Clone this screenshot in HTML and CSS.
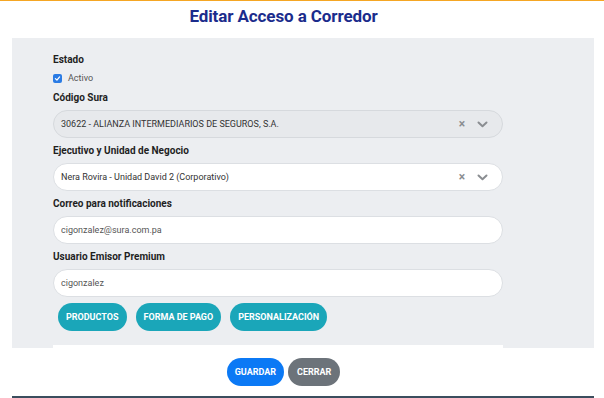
FILE: index.html
```html
<!DOCTYPE html>
<html lang="es">
<head>
  <meta charset="UTF-8" />
  <title>Editar Acceso a Corredor</title>
  <meta name="viewport" content="width=device-width, initial-scale=1.0" />
  <link rel="stylesheet" href="styles.css">
</head>
<body>
  <div class="modal-header">
    <h1 class="modal-title">Editar Acceso a Corredor</h1>
  </div>

  <div class="modal-body">
    <div class="field">
      <div class="label label-short">Estado</div>
      <label class="check-row">
        <span class="check">
          <svg width="7" height="7" viewBox="0 0 10 10"><path d="M2 5.2 L4.2 7.3 L8 2.8" fill="none" stroke="#fff" stroke-width="1.8" stroke-linecap="round" stroke-linejoin="round"/></svg>
        </span>
        <span class="check-text">Activo</span>
      </label>
    </div>

    <div class="field">
      <div class="label">Código Sura</div>
      <div class="select disabled">
        <span class="select-value">30622 - ALIANZA INTERMEDIARIOS DE SEGUROS, S.A.</span>
        <span class="select-clear">×</span>
        <svg class="select-arrow" width="11" height="7" viewBox="0 0 11 7"><path d="M1.5 1.5 L5.5 5.2 L9.5 1.5" fill="none" stroke="#8a8d91" stroke-width="2" stroke-linecap="round" stroke-linejoin="round"/></svg>
      </div>
    </div>

    <div class="field">
      <div class="label">Ejecutivo y Unidad de Negocio</div>
      <div class="select">
        <span class="select-value">Nera Rovira - Unidad David 2 (Corporativo)</span>
        <span class="select-clear">×</span>
        <svg class="select-arrow" width="11" height="7" viewBox="0 0 11 7"><path d="M1.5 1.5 L5.5 5.2 L9.5 1.5" fill="none" stroke="#8a8d91" stroke-width="2" stroke-linecap="round" stroke-linejoin="round"/></svg>
      </div>
    </div>

    <div class="field">
      <div class="label">Correo para notificaciones</div>
      <input class="input" type="text" value="cigonzalez@sura.com.pa" />
    </div>

    <div class="field">
      <div class="label">Usuario Emisor Premium</div>
      <input class="input" type="text" value="cigonzalez" />
    </div>

    <div class="tabs">
      <button class="btn btn-info">PRODUCTOS</button>
      <button class="btn btn-info">FORMA DE PAGO</button>
      <button class="btn btn-info">PERSONALIZACIÓN</button>
    </div>

    <div class="card"></div>
  </div>

  <div class="modal-footer">
    <button class="btn btn-primary">GUARDAR</button>
    <button class="btn btn-secondary">CERRAR</button>
  </div>
  <div class="footer-line"></div>
</body>
</html>
```

FILE: styles.css
```css
body {
  margin: 0;
  background-color: #ffffff;
  font-family: Roboto, 'Liberation Sans', sans-serif;
  color: #222;
  border-top: 1px solid #f5a623;
}

.modal-header {
  height: 37px;
  padding-right: 37px;
  display: flex;
  justify-content: center;
}

.modal-title {
  margin: 4px 0 0 0;
  font-size: 17px;
  font-weight: bold;
  color: #1b2c8c;
  letter-spacing: -0.1px;
  line-height: 22px;
}

.modal-body {
  margin: 0 10px 0 12px;
  background-color: #eceef1;
  padding: 15px 91px 0 41px;
  height: 310px;
  box-sizing: border-box;
  overflow: hidden;
}

.field {
  margin-bottom: 6px;
}

.label {
  font-size: 10px;
  font-weight: bold;
  line-height: 14px;
  margin-bottom: 5px;
  color: #1f1f1f;
}

.label-short {
  margin-bottom: 3px;
}

.check-row {
  display: flex;
  align-items: center;
  height: 16px;
  margin-bottom: -1px;
}

.check {
  width: 9px;
  height: 9px;
  border-radius: 2px;
  background-color: #2a7be4;
  display: flex;
  align-items: center;
  justify-content: center;
}

.check-text {
  margin-left: 6px;
  font-size: 9px;
  color: #555;
}

.select,
.input {
  height: 28px;
  border: 1px solid #dcdfe3;
  border-radius: 14px;
  background-color: #fff;
  box-sizing: border-box;
  width: 100%;
}

.select {
  display: flex;
  align-items: center;
  padding: 0 14px 0 7px;
}

.select.disabled {
  background-color: #e7e9ec;
  border-color: #d6d9dd;
}

.select-value {
  flex: 1;
  font-size: 9px;
  color: #333;
}

.select-clear {
  font-size: 12px;
  color: #8a8d91;
  margin-right: 12px;
  font-weight: bold;
}

.input {
  display: block;
  padding: 0 7px;
  font-family: Roboto, 'Liberation Sans', sans-serif;
  font-size: 9px;
  color: #555;
  outline: none;
}

.tabs {
  display: flex;
  gap: 9px;
  padding-left: 5px;
}

.btn {
  height: 28px;
  border: none;
  border-radius: 14px;
  color: #fff;
  font-family: Roboto, 'Liberation Sans', sans-serif;
  font-weight: bold;
  font-size: 9px;
  padding: 0 8px;
  cursor: pointer;
}

.btn-info {
  background-color: #1aa6b9;
}

.btn-primary {
  background-color: #0b79f5;
}

.btn-secondary {
  background-color: #6c737a;
  padding: 0 9px;
}

.card {
  margin-top: 14px;
  height: 20px;
  background-color: #fff;
}

.modal-footer {
  height: 48px;
  padding-right: 37px;
  display: flex;
  justify-content: center;
  align-items: center;
  gap: 4px;
}

.footer-line {
  margin: 0 10px 0 12px;
  height: 2px;
  background-color: #3b4e5e;
}
```
